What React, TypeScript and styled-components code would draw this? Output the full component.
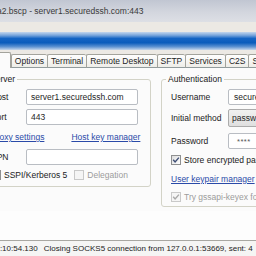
import React from "react";
import styled, { createGlobalStyle } from "styled-components";

const GlobalStyle = createGlobalStyle`
  html, body {
    margin: 0;
    padding: 0;
    background: #ece9e4;
  }
`;

const Window = styled.div`
  width: 256px;
  height: 256px;
  overflow: hidden;
  display: flex;
  flex-direction: column;
  background: #ece9e4;
  font-family: "Liberation Sans", Arial, sans-serif;
  font-size: 8.5px;
  color: #1c1c1c;
`;

const TitleBar = styled.div`
  height: 22px;
  flex-shrink: 0;
  display: flex;
  align-items: center;
  white-space: nowrap;
  background: linear-gradient(#c1c6d2, #d3d6de 55%, #dddfe5);
  color: #3a3a3a;

  span {
    margin-left: -3px;
  }
`;

const ToolbarArea = styled.div`
  flex-shrink: 0;
  padding: 10px 0 3px;
`;

const BlueBar = styled.div`
  height: 18px;
  background: linear-gradient(
    #c4d6ec,
    #7aa6dc 18%,
    #1464c4 36%,
    #0a5cbc 60%,
    #5e93d2 82%,
    #c6d7eb
  );
`;

const TabStrip = styled.div`
  height: 15px;
  flex-shrink: 0;
  display: flex;
  align-items: flex-end;
  white-space: nowrap;
`;

const Tab = styled.div<{ $active?: boolean }>`
  box-sizing: border-box;
  flex-shrink: 0;
  display: flex;
  align-items: center;
  height: ${({ $active }) => ($active ? 16 : 14)}px;
  padding: ${({ $active }) => ($active ? "0 14px 0 4px" : "0 3px")};
  margin-left: ${({ $active }) => ($active ? "-30px" : "0")};
  border: 1px solid #a3a39c;
  border-right: ${({ $active }) => ($active ? "1px solid #a3a39c" : "none")};
  border-bottom: ${({ $active }) => ($active ? "none" : "1px solid #919b9c")};
  border-radius: 2px 2px 0 0;
  background: ${({ $active }) =>
    $active ? "#fbfbfb" : "linear-gradient(#fefefe, #eeede8)"};
  color: #1e1e1e;
`;

const TabFiller = styled.div`
  flex: 1;
  height: 100%;
  box-sizing: border-box;
  border-bottom: 1px solid #919b9c;
`;

const Pane = styled.div`
  flex-shrink: 0;
  background: #fbfbfb;
  padding: 6px 0 4px;
`;

const Columns = styled.div`
  display: flex;
  align-items: flex-start;
  gap: 10px;
  margin-left: -20px;
`;

const Group = styled.fieldset<{ $w: number; $pl: number; $pb: number }>`
  box-sizing: border-box;
  flex-shrink: 0;
  width: ${({ $w }) => $w}px;
  min-width: 0;
  margin: 0;
  padding: 5px 0 ${({ $pb }) => $pb}px ${({ $pl }) => $pl}px;
  border: 1px solid #d3d3c7;
  border-radius: 3px;
`;

const Legend = styled.legend<{ $ml: number }>`
  padding: 0 2px;
  margin-left: ${({ $ml }) => $ml}px;
  line-height: 10px;
  color: #202020;
`;

const Stack = styled.div`
  display: flex;
  flex-direction: column;
  gap: 4px;
`;

const FormRow = styled.div<{ $h?: number; $mt?: number; $gap?: number }>`
  display: flex;
  align-items: center;
  height: ${({ $h }) => $h ?? 16}px;
  margin-top: ${({ $mt }) => $mt ?? 0}px;
  gap: ${({ $gap }) => $gap ?? 0}px;
  white-space: nowrap;
`;

const Label = styled.span<{ $w: number }>`
  width: ${({ $w }) => $w}px;
  flex-shrink: 0;
  color: #222;
`;

const TextBox = styled.div<{ $w: number; $pl?: number }>`
  box-sizing: border-box;
  width: ${({ $w }) => $w}px;
  height: 100%;
  flex-shrink: 0;
  display: flex;
  align-items: center;
  padding-left: ${({ $pl }) => $pl ?? 4}px;
  border: 1px solid #b9bdc3;
  border-radius: 2px;
  background: #ffffff;
  color: #262626;
`;

const ComboBox = styled(TextBox)`
  background: linear-gradient(#f1f1f1, #dfdfdf);
  border-color: #ababab;
`;

const Masked = styled.span`
  font-size: 7.5px;
  letter-spacing: 0.5px;
  color: #555;
`;

const LinkText = styled.span`
  color: #2a4aa8;
  text-decoration: underline;
`;

const CheckLabel = styled.span<{ $disabled?: boolean }>`
  display: flex;
  align-items: center;
  color: ${({ $disabled }) => ($disabled ? "#9c9c9c" : "#222")};
`;

const Box = styled.span<{ $disabled?: boolean }>`
  box-sizing: border-box;
  width: 10px;
  height: 10px;
  flex-shrink: 0;
  margin-right: 3px;
  display: flex;
  align-items: center;
  justify-content: center;
  border: 1px solid ${({ $disabled }) => ($disabled ? "#c9c9c9" : "#8e8f8f")};
  background: ${({ $disabled }) =>
    $disabled ? "#f5f5f5" : "linear-gradient(135deg, #dcdcdc, #ffffff)"};
`;

const LogArea = styled.div`
  flex: 1;
  background: #fdfdfd;
`;

const StatusBar = styled.div`
  flex-shrink: 0;
  height: 16px;
  box-sizing: border-box;
  border-top: 1px solid #a8a7a2;
  background: #f5f5f4;
  display: flex;
  align-items: center;
  white-space: nowrap;
  font-size: 8px;
  color: #222;
`;

const TimeCell = styled.span`
  margin-left: -9px;
  margin-right: 6px;
`;

function CheckBox({
  label,
  checked,
  disabled,
}: {
  label: string;
  checked?: boolean;
  disabled?: boolean;
}) {
  return (
    <CheckLabel $disabled={disabled}>
      <Box $disabled={disabled}>
        {checked && (
          <svg width="8" height="8" viewBox="0 0 8 8">
            <path
              d="M1.2 3.8 L3.1 5.9 L6.9 1.6"
              fill="none"
              stroke={disabled ? "#a8a8a8" : "#3d4d74"}
              strokeWidth="1.4"
            />
          </svg>
        )}
      </Box>
      {label}
    </CheckLabel>
  );
}

export default function App() {
  return (
    <>
      <GlobalStyle />
      <Window>
        <TitleBar>
          <span>a2.bscp - server1.securedssh.com:443</span>
        </TitleBar>
        <ToolbarArea>
          <BlueBar />
        </ToolbarArea>
        <TabStrip>
          <Tab $active>Login</Tab>
          <Tab>Options</Tab>
          <Tab>Terminal</Tab>
          <Tab>Remote Desktop</Tab>
          <Tab>SFTP</Tab>
          <Tab>Services</Tab>
          <Tab>C2S</Tab>
          <Tab>S2C</Tab>
          <TabFiller />
        </TabStrip>
        <Pane>
          <Columns>
            <Group $w={171} $pl={10} $pb={5}>
              <Legend $ml={-3}>Server</Legend>
              <Stack>
                <FormRow>
                  <Label $w={35}>Host</Label>
                  <TextBox $w={112}>server1.securedssh.com</TextBox>
                </FormRow>
                <FormRow>
                  <Label $w={35}>Port</Label>
                  <TextBox $w={112}>443</TextBox>
                </FormRow>
                <FormRow $gap={27}>
                  <LinkText>Proxy settings</LinkText>
                  <LinkText>Host key manager</LinkText>
                </FormRow>
                <FormRow>
                  <Label $w={35}>SPN</Label>
                  <TextBox $w={112} />
                </FormRow>
                <FormRow $h={12} $gap={7}>
                  <CheckBox label="SSPI/Kerberos 5" />
                  <CheckBox label="Delegation" disabled />
                </FormRow>
              </Stack>
            </Group>
            <Group $w={150} $pl={9} $pb={3}>
              <Legend $ml={-5}>Authentication</Legend>
              <FormRow>
                <Label $w={57}>Username</Label>
                <TextBox $w={80} $pl={5}>
                  securedssh
                </TextBox>
              </FormRow>
              <FormRow $h={18} $mt={4}>
                <Label $w={57}>Initial method</Label>
                <ComboBox $w={80} $pl={3}>
                  password
                </ComboBox>
              </FormRow>
              <FormRow $mt={6}>
                <Label $w={57}>Password</Label>
                <TextBox $w={80} $pl={8}>
                  <Masked>****</Masked>
                </TextBox>
              </FormRow>
              <FormRow $h={12} $mt={5}>
                <CheckBox label="Store encrypted password in profile" checked />
              </FormRow>
              <FormRow $h={12} $mt={7}>
                <LinkText>User keypair manager</LinkText>
              </FormRow>
              <FormRow $h={12} $mt={6}>
                <CheckBox label="Try gssapi-keyex for authentication" checked disabled />
              </FormRow>
            </Group>
          </Columns>
        </Pane>
        <LogArea />
        <StatusBar>
          <TimeCell>12:10:54.130</TimeCell>
          <span>Closing SOCKS5 connection from 127.0.0.1:53669, sent: 4</span>
        </StatusBar>
      </Window>
    </>
  );
}
